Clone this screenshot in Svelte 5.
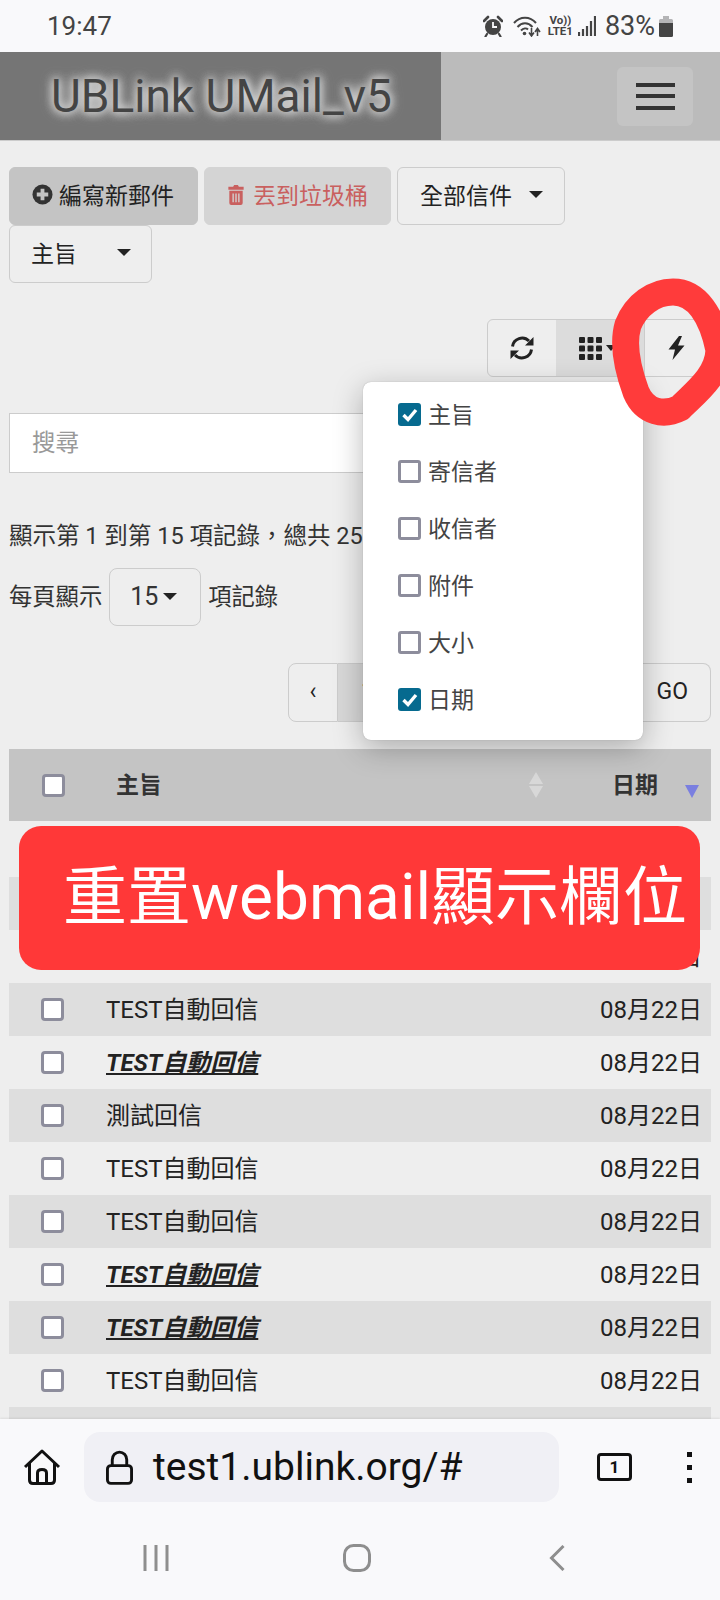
<script>
  const columns = [
    { label: "主旨", on: true },
    { label: "寄信者", on: false },
    { label: "收信者", on: false },
    { label: "附件", on: false },
    { label: "大小", on: false },
    { label: "日期", on: true }
  ];

  const rows = [
    { subject: "TEST自動回信", unread: false },
    { subject: "TEST自動回信", unread: false },
    { subject: "TEST自動回信", unread: false },
    { subject: "TEST自動回信", unread: false },
    { subject: "TEST自動回信", unread: true },
    { subject: "測試回信", unread: false },
    { subject: "TEST自動回信", unread: false },
    { subject: "TEST自動回信", unread: false },
    { subject: "TEST自動回信", unread: true },
    { subject: "TEST自動回信", unread: true },
    { subject: "TEST自動回信", unread: false }
  ];
</script>

<div class="phone">
  <header class="status">
    <span class="time">19:47</span>
    <div class="status-icons">
      <svg class="alarm" viewBox="0 0 20 22" width="20" height="22">
        <circle cx="10" cy="12" r="8" fill="#444" />
        <path d="M1 6 L5 2 M19 6 L15 2" stroke="#444" stroke-width="2.6" stroke-linecap="round" />
        <path d="M4 19 L2.5 21.5 M16 19 L17.5 21.5" stroke="#444" stroke-width="2.2" stroke-linecap="round" />
        <path d="M10 7 V12 H14" stroke="#f9f9fb" stroke-width="1.8" fill="none" />
      </svg>
      <svg class="wifi" viewBox="0 0 28 21" width="28" height="21">
        <path d="M1 7 C7 0 17 0 23 7 M4.5 11 C9 6 15 6 19.5 11 M8 14.5 C10.5 12 13.5 12 15 13.5" stroke="#444" stroke-width="2" fill="none" />
        <circle cx="11.5" cy="17.5" r="1.8" fill="#444" />
        <path d="M18.5 12 V19 M16 16.5 L18.5 20 L21 16.5 M24.5 20 V13 M22 16 L24.5 12.5 L27 16" stroke="#444" stroke-width="1.6" fill="none" />
      </svg>
      <div class="volte"><span>Vo))</span><span>LTE1</span></div>
      <svg class="signal" viewBox="0 0 18 20" width="18" height="20">
        <path d="M1 20 V16 M5 20 V13 M9 20 V10 M13 20 V5 M17 20 V0" stroke="#444" stroke-width="2.2" />
      </svg>
      <span class="battery-text">83%</span>
      <svg class="battery" viewBox="0 0 14 21" width="14" height="21">
        <path d="M4 0 H10 V3 H4 Z M1.5 3 H12.5 Q14 3 14 4.5 V7 H0 V4.5 Q0 3 1.5 3 Z" fill="#b4b4b6" />
        <path d="M0 7 H14 V19.5 Q14 21 12.5 21 H1.5 Q0 21 0 19.5 Z" fill="#444" />
      </svg>
    </div>
  </header>

  <nav class="navbar">
    <div class="brand"><span>UBLink UMail_v5</span></div>
    <div class="nav-right">
      <button class="toggler" aria-label="menu"><i></i><i></i><i></i></button>
    </div>
  </nav>

  <main class="content">
    <div class="actions">
      <button class="btn btn-compose">
        <svg viewBox="0 0 22 22" width="21" height="21">
          <circle cx="11" cy="11" r="10.5" fill="#333" />
          <path d="M11 5 V17 M5 11 H17" stroke="#c4c4c4" stroke-width="4" />
        </svg>
        編寫新郵件
      </button>
      <button class="btn btn-trash">
        <svg viewBox="0 0 18 22" width="18" height="21">
          <path d="M6 3 L7 1 H11 L12 3 H17 V6 H1 V3 Z M2 7 H16 V20 Q16 22 14 22 H4 Q2 22 2 20 Z" fill="#c9605f" />
          <path d="M6 10 V19 M9 10 V19 M12 10 V19" stroke="#d4d4d4" stroke-width="1.4" />
        </svg>
        丟到垃圾桶
      </button>
      <button class="btn btn-all">全部信件<b class="caret"></b></button>
      <button class="btn btn-field">主旨<b class="caret"></b></button>
    </div>

    <div class="toolbar">
      <div class="tool-group">
        <button class="tool tool-refresh" aria-label="refresh">
          <svg viewBox="0 0 24 24" width="24" height="24">
            <path d="M2.5 10.5 A9.7 9.7 0 0 1 19 5 M21.5 13.5 A9.7 9.7 0 0 1 5 19" stroke="#222" stroke-width="3" fill="none" />
            <path d="M23.5 1 V9.5 H15 Z M0.5 23 V14.5 H9 Z" fill="#222" />
          </svg>
        </button>
        <button class="tool tool-columns" aria-label="columns">
          <svg viewBox="0 0 23 23" width="23" height="23">
            {#each [0, 8.5, 17] as y}
              {#each [0, 8.5, 17] as x}
                <rect {x} {y} width="6" height="6" rx="1" fill="#222" />
              {/each}
            {/each}
          </svg>
          <b class="caret"></b>
        </button>
        <button class="tool tool-bolt" aria-label="reset">
          <svg viewBox="0 0 17 24" width="17" height="24">
            <path d="M11 0 L0.5 13.5 H7 L4.5 24 L16.5 9.5 H10 L14 0 Z" fill="#222" />
          </svg>
        </button>
      </div>

      <div class="column-menu">
        {#each columns as col}
          <div class="column-item">
            <span class="check" class:checked={col.on}>
              {#if col.on}
                <svg viewBox="0 0 23 23" width="23" height="23">
                  <path d="M5.5 12 L10 16.5 L18 7" stroke="#fff" stroke-width="3.4" fill="none" />
                </svg>
              {/if}
            </span>
            <span class="column-label">{col.label}</span>
          </div>
        {/each}
      </div>
    </div>

    <div class="search">搜尋</div>

    <p class="info">顯示第 1 到第 15 項記錄，總共 25 項記錄</p>
    <div class="page-size">
      <span class="size-label">每頁顯示</span>
      <button class="size-btn">15<b class="caret"></b></button>
      <span class="size-label">項記錄</span>
    </div>

    <div class="pager">
      <span class="page first">‹</span>
      <span class="page active">1</span>
      <span class="page">2</span>
      <span class="page">3</span>
      <span class="page">›</span>
      <span class="page go">GO</span>
    </div>

    <div class="thead">
      <span class="box"></span>
      <span class="th-subject">主旨</span>
      <span class="sort-both"><i class="up"></i><i class="down"></i></span>
      <span class="th-date">日期</span>
      <span class="sort-desc"></span>
    </div>

    <div class="tbody">
      {#each rows as row, i}
        <div class="row" class:odd={i % 2 === 1}>
          <span class="box"></span>
          <span class="subject" class:unread={row.unread}>{row.subject}</span>
          <span class="date">08月22日</span>
        </div>
      {/each}
      <div class="row odd"></div>
    </div>
  </main>

  <footer class="browser">
    <div class="url-row">
      <svg class="home" viewBox="0 0 38 38" width="38" height="38">
        <path d="M2 19 L19 3 L36 19 M6.5 15.5 V32 Q6.5 35.5 10 35.5 H28 Q31.5 35.5 31.5 32 V15.5 M14.5 35 V25 Q14.5 21.5 19 21.5 Q23.5 21.5 23.5 25 V35" stroke="#111" stroke-width="3" fill="none" stroke-linejoin="round" />
      </svg>
      <div class="url">
        <svg viewBox="0 0 28 36" width="27" height="35">
          <path d="M6.5 16 V10 A7.5 8 0 0 1 21.5 10 V16" stroke="#111" stroke-width="3" fill="none" />
          <rect x="1.5" y="16" width="25" height="18.5" rx="3.5" stroke="#111" stroke-width="3" fill="none" />
        </svg>
        <span>test1.ublink.org/#</span>
      </div>
      <span class="tabs">1</span>
      <span class="dots"><i></i><i></i><i></i></span>
    </div>
    <div class="system-nav">
      <svg viewBox="0 0 26 26" width="26" height="26">
        <path d="M2 0 V26 M13 0 V26 M24 0 V26" stroke="#8e8e8e" stroke-width="3" />
      </svg>
      <svg class="nav-home" viewBox="0 0 28 28" width="28" height="28">
        <rect x="1.5" y="1.5" width="25" height="25" rx="9" stroke="#8e8e8e" stroke-width="3" fill="none" />
      </svg>
      <svg viewBox="0 0 16 26" width="16" height="26">
        <path d="M14.5 1 L2.5 13 L14.5 25" stroke="#8e8e8e" stroke-width="3" fill="none" />
      </svg>
    </div>
  </footer>

  <div class="banner">重置webmail顯示欄位</div>

  <svg class="scribble" viewBox="0 0 720 1600" width="720" height="1600">
    <path d="M673 292 C697 292 712 316 719 350 C718 376 696 392 680 408 C664 416 645 413 636 392 C628 370 622 345 628 325 C636 305 654 292 673 292 Z" stroke="#ff3b3b" stroke-width="27" fill="none" stroke-linejoin="round" />
  </svg>
</div>

<style>
  :global(body) {
    background: #eee;
  }

  .phone {
    position: relative;
    width: 720px;
    height: 1600px;
    display: flex;
    flex-direction: column;
    overflow: hidden;
    background: #eee;
    color: #222;
    font-family: Roboto, "Noto Sans CJK TC", sans-serif;
    font-size: 23px;
  }

  button {
    font: inherit;
    color: inherit;
    background: none;
    margin: 0;
    padding: 0;
    box-sizing: border-box;
  }

  .caret {
    display: inline-block;
    width: 0;
    height: 0;
    border-top: 7px solid #222;
    border-left: 7px solid transparent;
    border-right: 7px solid transparent;
  }

  .status {
    flex: none;
    height: 52px;
    background: #f9f9fb;
    display: flex;
    align-items: center;
    justify-content: space-between;
    padding: 0 47px 0 47px;
    color: #444;
  }

  .time {
    font-size: 26px;
  }

  .status-icons {
    display: flex;
    align-items: center;
  }

  .wifi {
    margin-left: 10px;
  }

  .volte {
    display: flex;
    flex-direction: column;
    margin-left: 7px;
    font-size: 11.5px;
    font-weight: 700;
    line-height: 11px;
    text-align: center;
  }

  .signal {
    margin-left: 5px;
  }

  .battery-text {
    margin-left: 9px;
    font-size: 27px;
  }

  .battery {
    margin-left: 4px;
  }

  .navbar {
    flex: none;
    display: flex;
    border-bottom: 1px solid #ccc;
    box-sizing: border-box;
    height: 89px;
  }

  .brand {
    width: 441px;
    background: #757575;
    display: flex;
    align-items: center;
    padding-left: 51px;
    box-sizing: border-box;
    font-size: 46px;
    color: #444;
    text-shadow: 0 0 10px #ddd, 0 0 10px #ddd, 0 0 14px #bbb;
  }

  .nav-right {
    flex: 1;
    background: #bbb;
    display: flex;
    justify-content: flex-end;
    align-items: center;
    padding-right: 27px;
  }

  .toggler {
    width: 76px;
    height: 59px;
    border: 0;
    border-radius: 6px;
    background: #c4c4c4;
    display: flex;
    flex-direction: column;
    align-items: center;
    justify-content: center;
    gap: 7.5px;
  }

  .toggler i {
    display: block;
    width: 39px;
    height: 4px;
    background: #333;
  }

  .content {
    flex: 1;
    min-height: 0;
    overflow: hidden;
    padding: 26px 9px 0;
  }

  .actions {
    display: flex;
    flex-wrap: wrap;
    column-gap: 6px;
  }

  .btn {
    height: 58px;
    border-radius: 6px;
    border: 1px solid #ccc;
    display: flex;
    align-items: center;
    padding-bottom: 4px;
  }

  .btn-compose {
    width: 189px;
    padding-left: 22px;
    gap: 6px;
    background: #c4c4c4;
    border-color: #c4c4c4;
  }

  .btn-trash {
    width: 187px;
    padding-left: 22px;
    gap: 8px;
    background: #d4d4d4;
    border-color: #d4d4d4;
    color: #c9605f;
  }

  .btn-all {
    width: 168px;
    padding-left: 22px;
    gap: 17px;
  }

  .btn-field {
    width: 143px;
    padding-left: 21px;
    gap: 40px;
  }

  .toolbar {
    position: relative;
    display: flex;
    justify-content: flex-end;
    margin-top: 36px;
  }

  .tool-group {
    display: flex;
    height: 58px;
    border: 1px solid #ccc;
    border-radius: 6px;
    box-sizing: border-box;
    width: 224px;
  }

  .tool {
    border: 0;
    display: flex;
    align-items: center;
    justify-content: center;
  }

  .tool-refresh {
    width: 68px;
  }

  .tool-columns {
    width: 88px;
    background: #dcdcdc;
    gap: 4px;
    padding-right: 6px;
  }

  .tool-columns .caret {
    border-top-width: 6px;
    border-left-width: 5px;
    border-right-width: 5px;
  }

  .tool-bolt {
    flex: 1;
    border-left: 1px solid #ccc;
    padding-right: 2px;
  }

  .column-menu {
    position: absolute;
    top: 63px;
    left: 354px;
    width: 280px;
    height: 358px;
    box-sizing: border-box;
    padding-top: 4px;
    background: #fff;
    border-radius: 8px;
    box-shadow: 0 0 1px #999, 0 8px 30px rgba(0, 0, 0, 0.28);
    z-index: 5;
    color: #444;
  }

  .column-item {
    display: flex;
    align-items: center;
    height: 57px;
    padding-left: 35px;
    gap: 7px;
  }

  .column-label {
    padding-bottom: 4px;
  }

  .check {
    flex: none;
    width: 23px;
    height: 23px;
    box-sizing: border-box;
    border: 3px solid #8d8d9c;
    border-radius: 3px;
  }

  .check.checked {
    background: #066a8f;
    border: 0;
  }

  .check svg {
    display: block;
  }

  .search {
    margin-top: 36px;
    height: 60px;
    width: 610px;
    box-sizing: border-box;
    background: #fff;
    border: 1px solid #ccc;
    display: flex;
    align-items: center;
    padding: 0 0 5px 22px;
    font-size: 23.5px;
    color: #999;
  }

  .info {
    margin: 45px 0 0;
    line-height: 36px;
    font-size: 23.5px;
    white-space: nowrap;
    color: #333;
  }

  .page-size {
    margin-top: 14px;
    display: flex;
    align-items: center;
    gap: 7px;
    color: #333;
    font-size: 23.3px;
  }

  .size-label {
    padding-bottom: 5px;
  }

  .size-btn {
    width: 92px;
    height: 58px;
    border: 1px solid #ccc;
    border-radius: 8px;
    display: flex;
    align-items: center;
    justify-content: center;
    gap: 5px;
    padding: 0 3px 1px 0;
    font-size: 25px;
  }

  .pager {
    margin-top: 37px;
    height: 59px;
    display: flex;
    justify-content: flex-end;
    font-size: 23px;
  }

  .page {
    width: 60px;
    box-sizing: border-box;
    border: 1px solid #ccc;
    border-left: 0;
    display: flex;
    align-items: center;
    justify-content: center;
    padding-bottom: 3px;
  }

  .page.first {
    width: 50px;
    border-left: 1px solid #ccc;
    border-radius: 8px 0 0 8px;
  }

  .page.active {
    background: #d8d8d8;
  }

  .page.go {
    width: 133px;
    justify-content: flex-end;
    padding-right: 22px;
    border-radius: 0 8px 8px 0;
  }

  .thead {
    margin-top: 27px;
    height: 72px;
    background: #c4c4c4;
    display: flex;
    align-items: center;
    padding-left: 33px;
    font-weight: 700;
    color: #333;
  }

  .box {
    flex: none;
    width: 23px;
    height: 23px;
    box-sizing: border-box;
    background: #fff;
    border: 3px solid #8d8d9c;
    border-radius: 4px;
  }

  .th-subject {
    margin-left: 51px;
    width: 413px;
    padding-bottom: 4px;
  }

  .th-date {
    padding-bottom: 4px;
  }

  .sort-both {
    display: flex;
    flex-direction: column;
    gap: 2px;
    width: 83px;
  }

  .sort-both i {
    width: 0;
    height: 0;
    border-left: 7px solid transparent;
    border-right: 7px solid transparent;
  }

  .sort-both .up {
    border-bottom: 12px solid #d8d8d8;
  }

  .sort-both .down {
    border-top: 12px solid #d8d8d8;
  }

  .sort-desc {
    margin-left: 27px;
    margin-top: 13px;
    width: 0;
    height: 0;
    border-top: 13px solid #7a7fe0;
    border-left: 7px solid transparent;
    border-right: 7px solid transparent;
  }

  .tbody {
    margin-top: 3px;
  }

  .row {
    height: 53px;
    display: flex;
    align-items: center;
    padding: 0 9px 0 32px;
    background: #eee;
    font-size: 24px;
  }

  .row.odd {
    background: #dedede;
  }

  .subject {
    margin-left: 42px;
    flex: 1;
    padding-bottom: 5px;
  }

  .date {
    padding-bottom: 5px;
  }

  .subject.unread {
    font-weight: 700;
    font-style: italic;
    text-decoration: underline;
  }

  .browser {
    flex: none;
    height: 181px;
    background: #f9f9fb;
    box-shadow: 0 -1px 2px rgba(0, 0, 0, 0.08);
    z-index: 2;
  }

  .url-row {
    display: flex;
    align-items: center;
    height: 96px;
    padding: 0 0 0 23px;
    box-sizing: border-box;
  }

  .home {
    flex: none;
  }

  .url {
    margin-left: 23px;
    width: 475px;
    height: 70px;
    background: #f0f0f5;
    border-radius: 16px;
    display: flex;
    align-items: center;
    padding-left: 22px;
    gap: 20px;
    box-sizing: border-box;
    font-size: 39px;
    color: #111;
  }

  .tabs {
    margin-left: 38px;
    width: 35px;
    height: 28px;
    box-sizing: border-box;
    border: 3px solid #111;
    border-radius: 4px;
    display: flex;
    align-items: center;
    justify-content: center;
    font-size: 17px;
    font-weight: 700;
    color: #111;
  }

  .dots {
    margin-left: 55px;
    display: flex;
    flex-direction: column;
    gap: 8px;
  }

  .dots i {
    display: block;
    width: 5px;
    height: 5px;
    background: #111;
  }

  .system-nav {
    height: 85px;
    display: flex;
    align-items: center;
    justify-content: space-between;
    padding: 0 155px 0 143px;
    box-sizing: border-box;
  }

  .nav-home {
    margin-right: 4px;
  }

  .banner {
    position: absolute;
    left: 19px;
    top: 826px;
    width: 681px;
    height: 144px;
    box-sizing: border-box;
    padding-left: 44px;
    border-radius: 22px;
    background: #ff3838;
    color: #fff;
    font-size: 64px;
    line-height: 144px;
    white-space: nowrap;
    z-index: 6;
  }

  .scribble {
    position: absolute;
    left: 0;
    top: 0;
    pointer-events: none;
    z-index: 7;
  }
</style>
